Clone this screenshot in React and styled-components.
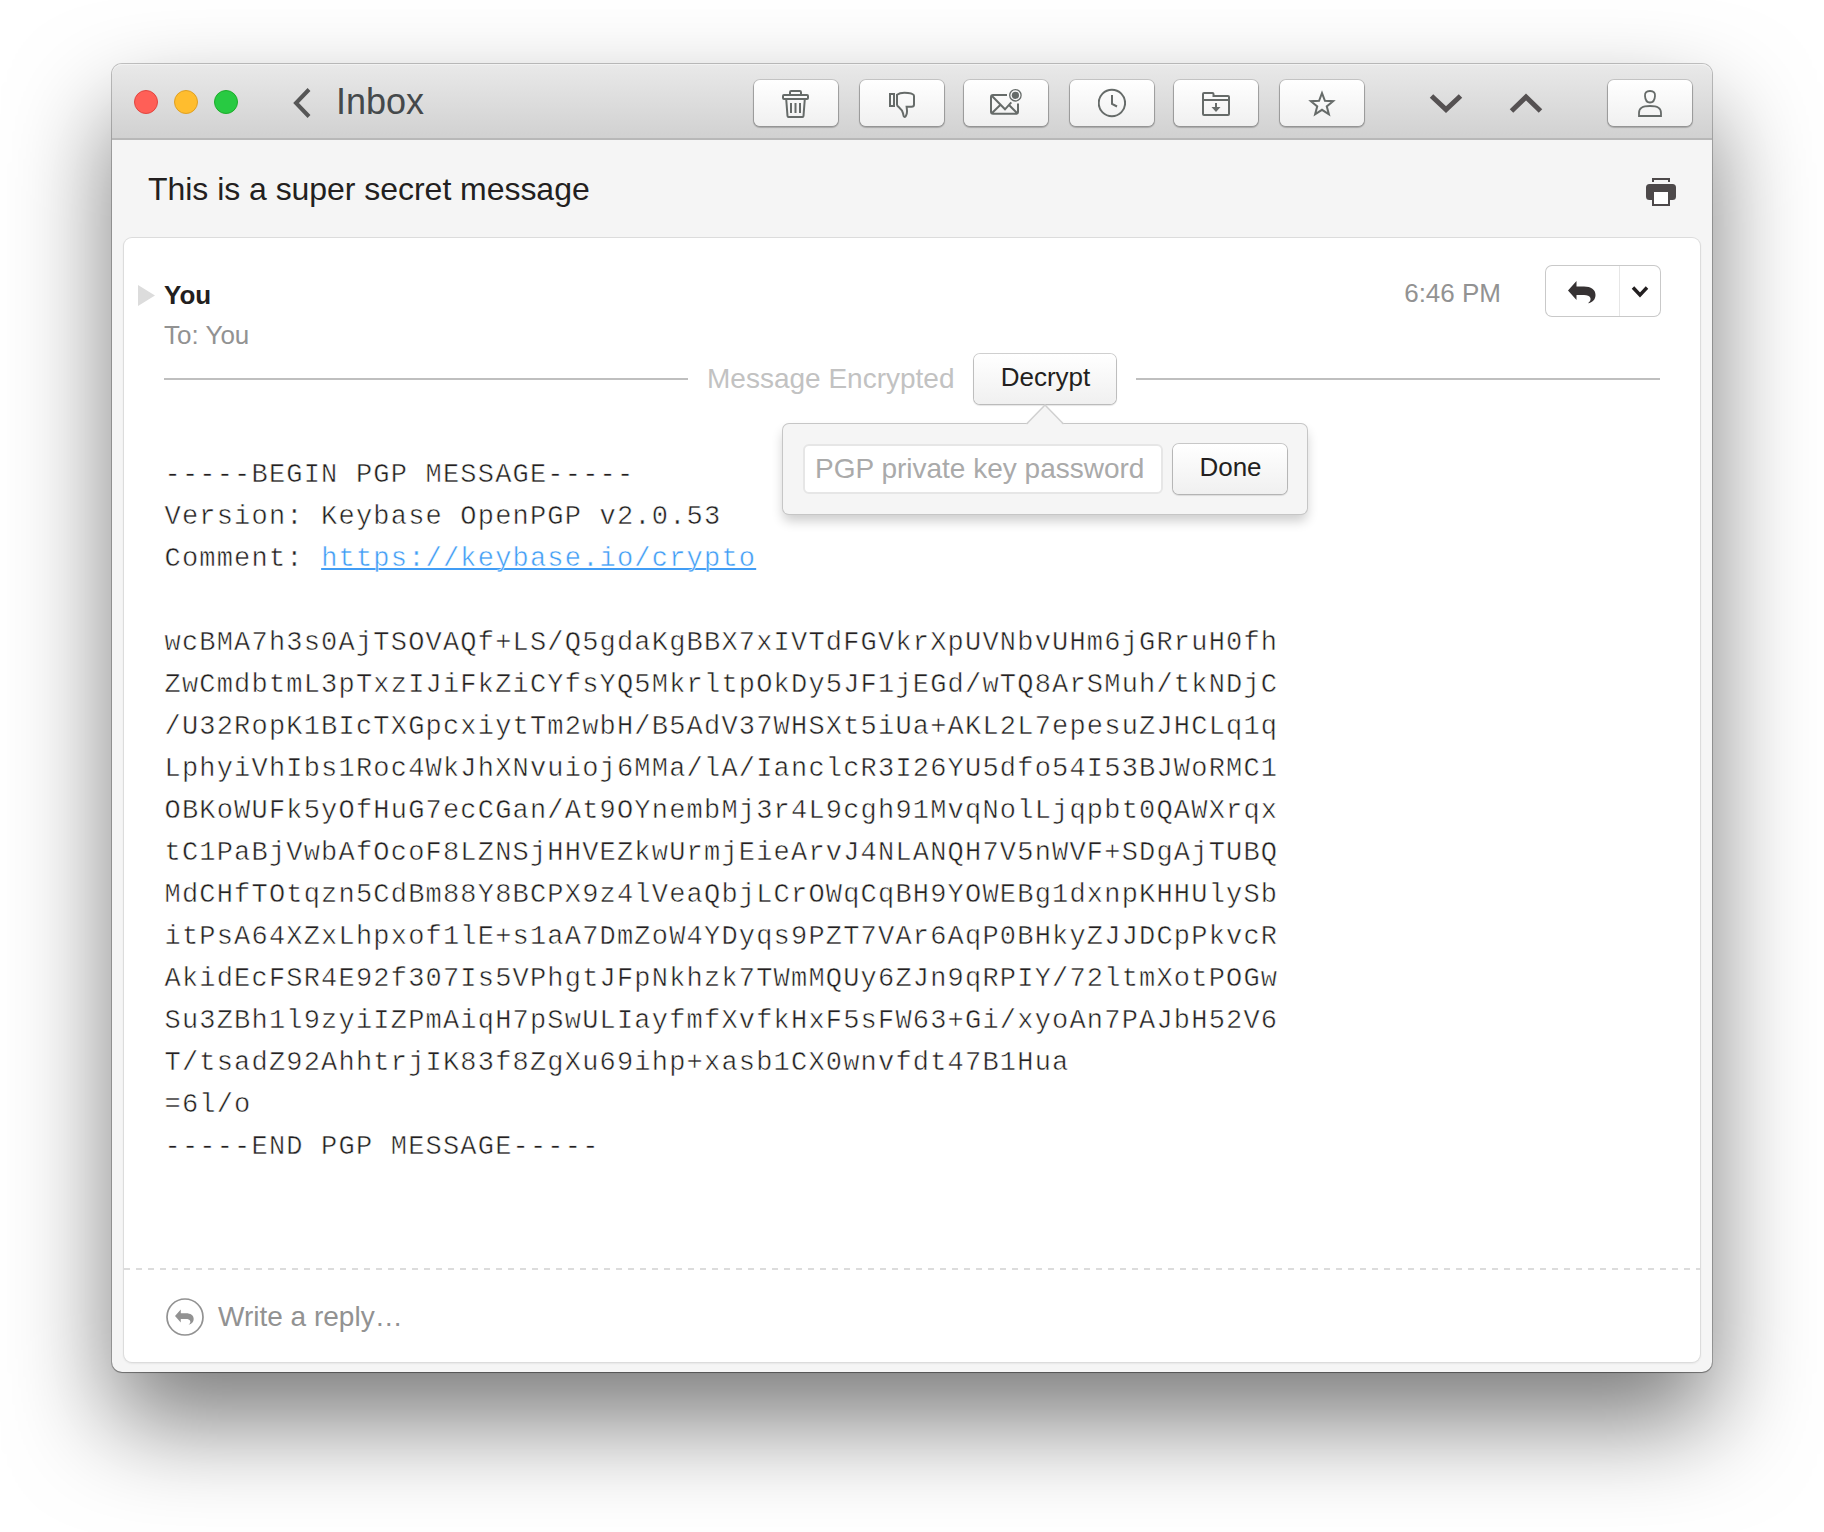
import React from 'react';
import styled, { createGlobalStyle, css } from 'styled-components';

const sans = '"Liberation Sans", Arial, Helvetica, sans-serif';
const mono = '"Liberation Mono", "Courier New", monospace';

const GlobalStyle = createGlobalStyle`
  *, *::before, *::after { box-sizing: border-box; }
  body {
    margin: 0;
    background: #fff;
    font-family: ${sans};
    color: #231f20;
  }
`;

const Desktop = styled.div`
  width: 1824px;
  height: 1532px;
  padding: 64px 112px 0;
  overflow: hidden;
`;

const Window = styled.main`
  display: flex;
  flex-direction: column;
  width: 1600px;
  height: 1308px;
  border-radius: 10px;
  background: #f5f5f5;
  box-shadow: 0 0 0 1px rgba(0, 0, 0, 0.22), 0 1px 1px rgba(0, 0, 0, 0.25), 0 50px 100px rgba(0, 0, 0, 0.52);
`;

const Toolbar = styled.header`
  display: flex;
  align-items: flex-start;
  height: 76px;
  flex: none;
  padding: 16px 20px 0 22px;
  border-bottom: 2px solid #b8b8b8;
  border-radius: 10px 10px 0 0;
  background: linear-gradient(#e9e9e9, #d1d1d1);
  box-shadow: inset 0 1px 0 #f2f2f2;
`;

const Lights = styled.div`
  display: flex;
  gap: 16px;
  padding-top: 10px;
`;

const Light = styled.span`
  width: 24px;
  height: 24px;
  border-radius: 50%;
  background: ${(p) => p.$fill};
  border: 1px solid ${(p) => p.$edge};
`;

const Back = styled.button`
  display: flex;
  align-items: flex-start;
  gap: 25px;
  margin-left: 54px;
  padding: 0;
  border: 0;
  background: none;
  font: 36px/40px ${sans};
  color: #45494b;
  svg { margin-top: 8px; }
  span { padding-top: 2px; }
`;

const Actions = styled.div`
  display: flex;
  margin-left: auto;
`;

const raised = css`
  border: 0;
  background: linear-gradient(#fff, #f0f0f0);
  box-shadow: 0 0 0 1px rgba(0, 0, 0, 0.18), 0 1px 1px 1px rgba(0, 0, 0, 0.1);
`;

const ToolButton = styled.button`
  ${raised}
  display: flex;
  align-items: center;
  justify-content: center;
  width: 84px;
  height: 46px;
  padding: 0;
  margin-left: ${(p) => p.$gap}px;
  border-radius: 6px;
  box-shadow: 0 0 0 1px rgba(0, 0, 0, 0.12), 0 1px 1px 1px rgba(0, 0, 0, 0.2);
`;

const Step = styled.button`
  display: flex;
  width: 34px;
  height: 22px;
  padding: 0;
  margin: 13px 0 0 ${(p) => p.$gap}px;
  border: 0;
  background: none;
`;

const Subject = styled.div`
  display: flex;
  justify-content: space-between;
  height: 98px;
  flex: none;
  padding: 30px 36px 0;
`;

const Title = styled.h1`
  margin: 0;
  font: 400 32px/38px ${sans};
  letter-spacing: -0.04px;
`;

const PrintIcon = styled.svg`
  margin-top: 8px;
`;

const Card = styled.article`
  display: flex;
  flex-direction: column;
  width: 1576px;
  height: 1124px;
  margin-left: 12px;
  border-radius: 8px;
  background: #fff;
  box-shadow: 0 0 0 1px #dcdcdc, 0 1px 2px 1px rgba(0, 0, 0, 0.06);
`;

const Head = styled.div`
  display: flex;
  align-items: flex-start;
  height: 116px;
  flex: none;
  padding: 28px 40px 0 14px;
`;

const Disclosure = styled.svg`
  margin: 19px 9px 0 0;
`;

const People = styled.div`
  font-size: 26px;
  line-height: 40px;
  padding-top: 9px;
`;

const From = styled.strong`
  display: block;
`;

const To = styled.span`
  color: #929292;
`;

const Time = styled.time`
  margin-left: auto;
  padding-top: 7px;
  font-size: 26px;
  line-height: 40px;
  color: #929292;
`;

const Split = styled.div`
  display: flex;
  width: 114px;
  height: 50px;
  margin-left: 45px;
  border-radius: 6px;
  background: #fff;
  box-shadow: 0 0 0 1px #c9c9c9;
`;

const SplitPart = styled.button`
  display: flex;
  width: ${(p) => p.$w}px;
  height: 50px;
  border: 0;
  border-left: ${(p) => (p.$ruled ? '1px solid #e6e6e6' : '0')};
  padding: ${(p) => p.$pad};
  background: none;
`;

const Notice = styled.div`
  display: flex;
  align-items: center;
  height: 50px;
  flex: none;
  padding: 0 40px;
  font-size: 28px;
  color: #c2c2c2;
`;

const Rule = styled.span`
  flex: 1;
  height: 2px;
  background: #bfbfbf;
`;

const NoticeText = styled.span`
  width: 248px;
  margin: 0 19px;
  white-space: nowrap;
`;

const Anchor = styled.div`
  position: relative;
  margin-right: 20px;
`;

const PushButton = styled.button`
  ${raised}
  display: block;
  width: ${(p) => p.$w}px;
  height: 50px;
  padding: 0 0 4px 1px;
  border-radius: 6px;
  font: 26px/46px ${sans};
  color: #231f20;
  text-align: center;
`;

const Popover = styled.form`
  position: absolute;
  z-index: 2;
  top: 70px;
  left: -191px;
  display: flex;
  gap: 10px;
  width: 524px;
  height: 90px;
  padding: 20px;
  border-radius: 6px;
  background: #f5f5f5;
  box-shadow: 0 0 0 1px #c6c6c6, 0 7px 12px rgba(0, 0, 0, 0.2);
`;

const Pointer = styled.svg`
  position: absolute;
  top: -20px;
  left: 242px;
`;

const Password = styled.input`
  width: 360px;
  height: 50px;
  margin: 0;
  padding: 0 0 0 10px;
  border: 2px solid #e6e6e6;
  border-radius: 6px;
  background: #fff;
  font: 28px ${sans};
  outline: none;
  &::placeholder { color: #aaa; opacity: 1; }
`;

const Body = styled.div`
  margin: 50px 0 0 40.5px;
  flex: 1;
  font: 27px/42px ${mono};
  letter-spacing: 1.2px;
  color: #231f20;
  -webkit-text-stroke: 0.5px #fff;
`;

const Line = styled.div`
  display: flex;
  height: 42px;
  white-space: pre;
`;

const Link = styled.a`
  color: #419df5;
  text-decoration: underline 2px #419df5;
  text-underline-offset: 2px;
  text-decoration-skip-ink: none;
`;

const Reply = styled.footer`
  flex: none;
  display: flex;
  align-items: center;
  gap: 14px;
  height: 94px;
  padding: 4px 42px 0;
  font-size: 28px;
  color: #929292;
  background: repeating-linear-gradient(90deg, #dcdcdc 0 6px, transparent 6px 12px) 0 0 / 100% 2px no-repeat;
`;

const line = { fill: 'none', stroke: '#666b69', strokeWidth: 2 };

const icons = {
  trash: (
    <g {...line}>
      <path d="M8 9V6.200Q8 5 9.200 5h8.600Q19 5 19 6.200V9" />
      <rect x="1" y="9" width="25" height="4" rx="1" />
      <path d="M4.200 13l1.300 17q.1 1 1 1h14q.9 0 1-1L22.800 13M9 17v10M13.500 17v10M18 17v10" />
    </g>
  ),
  thumb: (
    <g {...line}>
      <rect x="2" y="8" width="4" height="12" />
      <path d="M9 8.800C12 6.500 17 6.600 20 7q6 .7 6 3v8.500q0 2.200-2.500 2.200H18.600c.3 2 .8 4.500.2 6.800-.6 2.200-1.300 3.500-2.300 3.500-1.200 0-1-1.500-1.400-3.500C14.600 24.800 13 23 10.500 20.800Q9 19.800 9 18.500z" />
    </g>
  ),
  mail: (
    <g {...line}>
      <path d="M17 9H3Q1 9 1 11v14.700q0 2 2 2h23q2 0 2-2V17.500M2 10l13 13.300 6.300-7M2 27l9-8.700M27 27l-7.500-7.500" />
      <circle cx="25.400" cy="9.300" r="5.700" strokeWidth="1.300" />
      <circle cx="25.400" cy="9.300" r="3.600" fill="#666b69" stroke="none" />
    </g>
  ),
  clock: (
    <g {...line}>
      <circle cx="13.900" cy="17" r="13.200" />
      <path d="M14 9v9l5 2.500" />
    </g>
  ),
  folder: (
    <g {...line}>
      <path d="M2 29q-1 0-1-1V8q0-1 1-1h8.500q1 0 1 1v2H26q1 0 1 1v17q0 1-1 1zM1 14h26" />
      <path d="M14 17v5" strokeWidth="2" />
      <path d="M9.500 21h9L14 26z" fill="#666b69" stroke="none" />
    </g>
  ),
  star: (
    <path
      {...line}
      strokeLinejoin="miter"
      d="M14 7.100L16.940 14.750 25.130 15.180 18.760 20.350 20.880 28.270 14 23.800 7.120 28.270 9.240 20.350 2.870 15.180 11.060 14.750z"
    />
  ),
  person: (
    <g {...line} strokeWidth="1.800">
      <path d="M12 5c4 0 5.200 1.800 5 4.900-.2 4-2 6.600-5 6.600s-4.800-2.600-5-6.600C6.800 6.800 8 5 12 5z" />
      <path d="M1 30v-3c0-5 3-7 11-7s11 2 11 7v3z" />
    </g>
  ),
};

const Glyph = ({ name, w = 28 }) => (
  <svg width={w} height="34" viewBox={`0 0 ${w} 34`} aria-hidden="true">
    {icons[name]}
  </svg>
);

const actions = [
  { name: 'trash', gap: 0, w: 28 },
  { name: 'thumb', gap: 22, w: 28 },
  { name: 'mail', gap: 20, w: 32 },
  { name: 'clock', gap: 22, w: 28 },
  { name: 'folder', gap: 20, w: 28 },
  { name: 'star', gap: 22, w: 28 },
];

const replyPath =
  'M0 9.500L8.500 0v5.500H16c7 0 11.500 3 11.500 8.500 0 4.500-3 7.500-7.500 8.300 2.500-1.800 3-3.800 2.300-5.500-.8-1.900-3-2.700-6.300-2.700H8.500V19z';

const armored = `wcBMA7h3s0AjTSOVAQf+LS/Q5gdaKgBBX7xIVTdFGVkrXpUVNbvUHm6jGRruH0fh
ZwCmdbtmL3pTxzIJiFkZiCYfsYQ5MkrltpOkDy5JF1jEGd/wTQ8ArSMuh/tkNDjC
/U32RopK1BIcTXGpcxiytTm2wbH/B5AdV37WHSXt5iUa+AKL2L7epesuZJHCLq1q
LphyiVhIbs1Roc4WkJhXNvuioj6MMa/lA/IanclcR3I26YU5dfo54I53BJWoRMC1
OBKoWUFk5yOfHuG7ecCGan/At9OYnembMj3r4L9cgh91MvqNolLjqpbt0QAWXrqx
tC1PaBjVwbAfOcoF8LZNSjHHVEZkwUrmjEieArvJ4NLANQH7V5nWVF+SDgAjTUBQ
MdCHfTOtqzn5CdBm88Y8BCPX9z4lVeaQbjLCrOWqCqBH9YOWEBg1dxnpKHHUlySb
itPsA64XZxLhpxof1lE+s1aA7DmZoW4YDyqs9PZT7VAr6AqP0BHkyZJJDCpPkvcR
AkidEcFSR4E92f307Is5VPhgtJFpNkhzk7TWmMQUy6ZJn9qRPIY/72ltmXotPOGw
Su3ZBh1l9zyiIZPmAiqH7pSwULIayfmfXvfkHxF5sFW63+Gi/xyoAn7PAJbH52V6
T/tsadZ92AhhtrjIK83f8ZgXu69ihp+xasb1CX0wnvfdt47B1Hua
=6l/o
-----END PGP MESSAGE-----`.split('\n');

export default function App() {
  return (
    <>
      <GlobalStyle />
      <Desktop>
        <Window>
          <Toolbar>
            <Lights>
              <Light $fill="#ff5f57" $edge="#e14640" />
              <Light $fill="#ffbd2e" $edge="#dfa023" />
              <Light $fill="#28ca42" $edge="#1dad2b" />
            </Lights>
            <Back>
              <svg width="19" height="30" viewBox="0 0 19 30" fill="none" stroke="#565656" strokeWidth="4">
                <path d="M17 1.500L4 15l13 13.500" />
              </svg>
              <span>Inbox</span>
            </Back>
            <Actions>
              {actions.map((a) => (
                <ToolButton key={a.name} $gap={a.gap} aria-label={a.name}>
                  <Glyph name={a.name} w={a.w} />
                </ToolButton>
              ))}
              <Step $gap={65} aria-label="next">
                <svg width="34" height="22" fill="none" stroke="#555152" strokeWidth="5">
                  <path d="M2.500 3L17 16.500 31.500 3" />
                </svg>
              </Step>
              <Step $gap={46} aria-label="previous">
                <svg width="34" height="22" fill="none" stroke="#555152" strokeWidth="5">
                  <path d="M2.500 18L17 4l14.500 14" />
                </svg>
              </Step>
              <ToolButton $gap={65} aria-label="contact">
                <Glyph name="person" w={24} />
              </ToolButton>
            </Actions>
          </Toolbar>
          <Subject>
            <Title>This is a super secret message</Title>
            <PrintIcon width="30" height="28" viewBox="0 0 30 28">
              <path d="M7 4V1h16v3" fill="none" stroke="#4d494a" strokeWidth="2" />
              <path d="M3.500 6h23Q30 6 30 9.500v9q0 3.500-3.500 3.500H24v6H6v-6H3.500Q0 22 0 18.500v-9Q0 6 3.500 6z" fill="#4d494a" />
              <path d="M8 14h14v12H8z" fill="#fff" />
            </PrintIcon>
          </Subject>
          <Card>
            <Head>
              <Disclosure width="17" height="21">
                <path d="M0 0l17 10.500L0 21z" fill="#dcdcdc" />
              </Disclosure>
              <People>
                <From>You</From>
                <To>To: You</To>
              </People>
              <Time>6:46 PM</Time>
              <Split>
                <SplitPart $w={73} $pad="15px 0 0 22px" aria-label="reply">
                  <svg width="28" height="23" viewBox="0 0 28 23">
                    <path d={replyPath} fill="#363233" />
                  </svg>
                </SplitPart>
                <SplitPart $w={41} $ruled $pad="19px 0 0 11px" aria-label="more">
                  <svg width="18" height="14" fill="none" stroke="#231f20" strokeWidth="3.400">
                    <path d="M2 2.500l7 7.500 7-7.500" />
                  </svg>
                </SplitPart>
              </Split>
            </Head>
            <Notice>
              <Rule />
              <NoticeText>Message Encrypted</NoticeText>
              <Anchor>
                <PushButton $w={142}>Decrypt</PushButton>
                <Popover>
                  <Pointer width="40" height="21">
                    <path d="M1.500 21L20 1l18.500 20z" fill="#f5f5f5" />
                    <path d="M1.500 20L20 1l18.500 19" fill="none" stroke="#d0d0d0" strokeWidth="1.500" />
                  </Pointer>
                  <Password type="text" placeholder="PGP private key password" />
                  <PushButton $w={114} type="button">Done</PushButton>
                </Popover>
              </Anchor>
              <Rule />
            </Notice>
            <Body>
              <Line>-----BEGIN PGP MESSAGE-----</Line>
              <Line>Version: Keybase OpenPGP v2.0.53</Line>
              <Line>
                <span>{'Comment: '}</span>
                <Link>https://keybase.io/crypto</Link>
              </Line>
              <Line />
              {armored.map((text) => (
                <Line key={text}>{text}</Line>
              ))}
            </Body>
            <Reply>
              <svg width="38" height="38" viewBox="0 0 38 38">
                <circle cx="19" cy="19" r="18" fill="none" stroke="#929292" strokeWidth="1.700" />
                <path d={replyPath} fill="#929292" transform="translate(9 11.500) scale(.68)" />
              </svg>
              <span>Write a reply…</span>
            </Reply>
          </Card>
        </Window>
      </Desktop>
    </>
  );
}
